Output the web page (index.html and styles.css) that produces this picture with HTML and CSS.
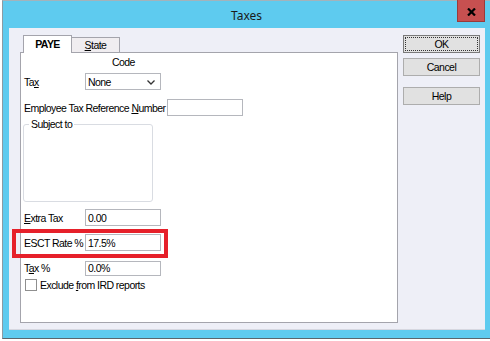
FILE: index.html
```html
<!DOCTYPE html>
<html lang="en">
<head>
  <meta charset="UTF-8" />
  <title>Taxes</title>
  <link rel="stylesheet" href="styles.css">
</head>
<body>
  <div class="window">
    <div class="titlebar">
      <span class="title">Taxes</span>
      <span class="close">
        <svg width="9" height="8" viewBox="0 0 9 8"><path d="M1 0.5 L8 7.5 M8 0.5 L1 7.5" stroke="#000" stroke-width="2.2" fill="none"/></svg>
      </span>
    </div>

    <div class="client">
      <div class="tabs-area">
        <div class="tab-strip">
          <div class="tab active">PAYE</div>
          <div class="tab"><u>S</u>tate</div>
        </div>

        <div class="tab-panel">
          <div class="code-head">Code</div>

          <div class="row">
            <label>Ta<u>x</u></label>
            <div class="field select">
              <span>None</span>
              <svg width="8" height="5" viewBox="0 0 8 5"><path d="M0.5 0.5 L4 4 L7.5 0.5" stroke="#333" stroke-width="1.3" fill="none"/></svg>
            </div>
          </div>

          <div class="row row-emp">
            <label class="wide">Employee Tax Reference <u>N</u>umber</label>
            <div class="field"></div>
          </div>

          <div class="group">
            <span class="group-title">Subject to</span>
          </div>

          <div class="row row-extra">
            <label><u>E</u>xtra Tax</label>
            <div class="field">0.00</div>
          </div>

          <div class="highlight">
            <div class="row">
              <label>ESCT Rate %</label>
              <div class="field">17.5%</div>
            </div>
          </div>

          <div class="row row-taxpc">
            <label>T<u>a</u>x %</label>
            <div class="field">0.0%</div>
          </div>

          <div class="check-row">
            <span class="checkbox"></span>
            <span>Exclude <u>f</u>rom IRD reports</span>
          </div>
        </div>
      </div>

      <div class="buttons">
        <div class="btn default"><span>OK</span></div>
        <div class="btn">Cancel</div>
        <div class="btn help">Help</div>
      </div>
    </div>
  </div>
</body>
</html>
```

FILE: styles.css
```css
body {
  margin: 0;
  background: #ffffff;
  font-family: "Liberation Sans", Arial, sans-serif;
  font-size: 10.5px;
  letter-spacing: -0.55px;
  color: #000;
}
.window {
  margin-left: 2px;
  height: 337px;
  background: #5ecbef;
  border-top: 1px solid #a3b3bb;
  border-left: 1px solid #8c9ba3;
  border-bottom: 1px solid #5a666d;
}
.titlebar {
  position: relative;
  height: 27px;
  display: flex;
  align-items: center;
  justify-content: center;
}
.title {
  font-family: "Noto Sans", sans-serif;
  font-size: 12px;
  letter-spacing: 0;
  color: #1a1a1a;
  padding-top: 1px;
}
.close {
  position: absolute;
  top: -1px;
  right: 5px;
  width: 26px;
  height: 19px;
  background: #c75050;
  border: 1px solid #9a3a3a;
  border-top: none;
  display: flex;
  align-items: center;
  justify-content: center;
  padding-top: 2px;
}
.client {
  margin: 0 5px 0 6px;
  height: 302px;
  box-sizing: border-box;
  background: #eeeff7;
  border-bottom: 1px solid #d6d7e0;
  padding: 7px 5px 0 11px;
  display: flex;
  gap: 5px;
}
.tabs-area {
  width: 378px;
}
.tab-strip {
  height: 17px;
  padding-left: 3px;
  display: flex;
  align-items: flex-end;
}
.tab {
  box-sizing: border-box;
  border: 1px solid #a4a4ac;
  border-bottom: none;
  display: flex;
  align-items: center;
  justify-content: center;
}
.tab.active {
  position: relative;
  z-index: 1;
  width: 49px;
  height: 18px;
  margin-bottom: -1px;
  background: #fff;
  font-weight: bold;
  padding-bottom: 1px;
}
.tab + .tab {
  width: 49px;
  height: 15px;
  margin-left: -1px;
  background: #f0edf0;
}
.tab-panel {
  height: 271px;
  box-sizing: border-box;
  background: #fff;
  border: 1px solid #a4a4ac;
}
.code-head {
  padding: 3px 0 0 91px;
  line-height: 13px;
}
.row {
  display: flex;
  align-items: center;
  padding-left: 3px;
  height: 17px;
  margin-top: 4px;
}
.row label {
  width: 61px;
}
.row label.wide {
  width: 143px;
}
.field {
  box-sizing: border-box;
  width: 76px;
  height: 17px;
  border: 1px solid #b5b7bd;
  padding-left: 2px;
  display: flex;
  align-items: center;
  background: #fff;
}
.select {
  justify-content: space-between;
  padding-right: 5px;
}
.select svg {
  margin-top: 1px;
}
.row-emp {
  margin-top: 9px;
}
.group {
  margin: 8px 0 0 2px;
  width: 130px;
  height: 78px;
  box-sizing: border-box;
  border: 1px solid #d9dce2;
  border-radius: 3px;
}
.group-title {
  display: block;
  width: fit-content;
  margin: -6px 0 0 5px;
  padding: 0 2px;
  line-height: 11px;
  background: #fff;
}
.row-extra {
  margin-top: 7px;
}
.highlight {
  box-sizing: border-box;
  width: 156px;
  margin: 3px 0 0 -9px;
  padding: 1px 0 3px 5px;
  border: 4px solid #e6202a;
}
.highlight .row {
  margin-top: 0;
}
.row-taxpc {
  margin-top: 2px;
  height: 16px;
}
.row-taxpc .field {
  height: 15px;
}
.check-row {
  display: flex;
  align-items: center;
  gap: 3px;
  margin: 3px 0 0 4px;
}
.checkbox {
  box-sizing: border-box;
  width: 12px;
  height: 12px;
  border: 1px solid #8f8f8f;
  background: #fff;
}
.buttons {
  width: 77px;
  display: flex;
  flex-direction: column;
}
.btn {
  box-sizing: border-box;
  height: 18px;
  background: #e1e1e1;
  border: 1px solid #adadad;
  display: flex;
  align-items: center;
  justify-content: center;
  margin-top: 5px;
}
.btn.default {
  margin-top: 0;
  border-color: #7a7a7a;
  padding: 1px;
}
.btn.default span {
  flex: 1;
  align-self: stretch;
  display: flex;
  align-items: center;
  justify-content: center;
  border: 1px dotted #333;
}
.btn.help {
  margin-top: 11px;
}
```
